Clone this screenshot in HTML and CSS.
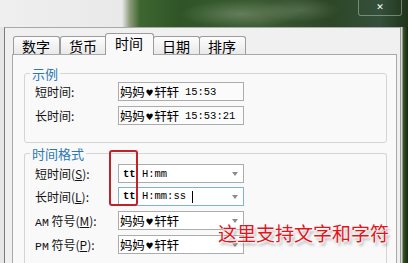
FILE: index.html
```html
<!DOCTYPE html>
<html lang="zh-CN">
<head>
    <meta charset="UTF-8">
    <title>区域选项 - 时间</title>
    <link rel="stylesheet" href="styles.css">
</head>
<body>
    <div class="titlebar">
        <div class="close-button">✕</div>
    </div>
    <div class="frame">
        <div class="frame-left"></div>
        <div class="dialog">
            <div class="tabs">
                <div class="tab">数字</div>
                <div class="tab">货币</div>
                <div class="tab selected">时间</div>
                <div class="tab">日期</div>
                <div class="tab">排序</div>
            </div>
            <div class="panel">
                <fieldset class="group">
                    <legend>示例</legend>
                    <div class="row">
                        <span class="label">短时间:</span>
                        <div class="textbox"><span class="cjk">妈妈<span class="heart">♥</span>轩轩</span> 15:53</div>
                    </div>
                    <div class="row">
                        <span class="label">长时间:</span>
                        <div class="textbox"><span class="cjk">妈妈<span class="heart">♥</span>轩轩</span> 15:53:21</div>
                    </div>
                </fieldset>
                <fieldset class="group group-format">
                    <legend>时间格式</legend>
                    <div class="row">
                        <span class="label">短时间(<u>S</u>):</span>
                        <div class="combo"><span class="mono"><b>tt</b> H:mm</span><span class="arrow"></span></div>
                    </div>
                    <div class="row">
                        <span class="label">长时间(<u>L</u>):</span>
                        <div class="combo focused"><span class="mono"><b>tt</b> H:mm:ss <span class="caret"></span></span><span class="arrow"></span></div>
                    </div>
                    <div class="row symbol">
                        <span class="label"><span class="ampm">AM</span> 符号(<u>M</u>):</span>
                        <div class="combo"><span class="cjk">妈妈<span class="heart">♥</span>轩轩</span><span class="arrow"></span></div>
                    </div>
                    <div class="row symbol">
                        <span class="label"><span class="ampm">PM</span> 符号(<u>P</u>):</span>
                        <div class="combo"><span class="cjk">妈妈<span class="heart">♥</span>轩轩</span><span class="arrow"></span></div>
                    </div>
                </fieldset>
            </div>
        </div>
        <div class="frame-right"></div>
    </div>

    <div class="highlight"></div>
    <div class="note">这里支持文字和字符</div>
</body>
</html>
```

FILE: styles.css
```css
body {
    margin: 0;
    width: 408px;
    height: 263px;
    overflow: hidden;
    position: relative;
    font-family: "Noto Sans CJK SC", "DejaVu Sans", sans-serif;
    font-size: 12px;
    color: #000;
    background-color: #2c4424;
}
.titlebar {
    height: 27px;
    display: flex;
    justify-content: flex-end;
    align-items: flex-start;
    background:
        radial-gradient(ellipse 60px 14px at 240px 14px, rgba(150, 170, 140, 0.45), transparent),
        radial-gradient(ellipse 40px 12px at 300px 10px, rgba(140, 160, 130, 0.35), transparent),
        linear-gradient(90deg, #efefef 0, #e9e9e9 122px, #8a9a78 130px, #3d6630 140px, #2f5426 180px, #3b5b33 260px, #2c4626 330px, #34503a 380px, #1f3419 100%);
}
.close-button {
    width: 42px;
    height: 15px;
    margin-right: 6px;
    border: 1px solid rgba(255, 255, 255, 0.35);
    border-top: none;
    border-radius: 0 0 3px 3px;
    color: #fff;
    font-family: "DejaVu Sans", sans-serif;
    font-size: 9px;
    font-weight: bold;
    line-height: 15px;
    text-align: center;
}
.frame {
    display: flex;
    height: 236px;
    overflow: hidden;
}
.frame-left {
    width: 4px;
    background-color: #e6e6e6;
}
.dialog {
    width: 395px;
    border-left: 1px solid #7c7c7c;
    border-top: 1px solid #a8a8a8;
    background-color: #f0f0f0;
    padding-top: 5px;
}
.frame-right {
    flex: 1;
    border-left: 1px solid #9a9a9a;
    background: linear-gradient(90deg, #d8d8d8 0, #d8d8d8 1px, #3c5a2a 2px, #23381b 5px, #182812 100%);
}
.tabs {
    display: flex;
    align-items: flex-end;
    height: 21px;
    padding-left: 8px;
    position: relative;
    z-index: 1;
}
.tab {
    height: 17px;
    padding: 0 9px 0 8px;
    border: 1px solid #9c9c9c;
    border-bottom: none;
    border-radius: 3px 3px 0 0;
    margin-right: -1px;
    background: linear-gradient(#fdfdfd, #e9e9e9);
    font-size: 14px;
    line-height: 18px;
    color: #000;
}
.tab.selected {
    height: 21px;
    padding: 0 10px 0 9px;
    margin: 0 -1px -1px -1px;
    background: #f9f9f9;
    line-height: 19px;
    position: relative;
}
.tab:nth-child(2) {
    margin-left: 1px;
}
.panel {
    box-sizing: border-box;
    margin: 0 3px 0 7px;
    height: 210px;
    overflow: hidden;
    border: 1px solid #a8a8a8;
    border-bottom: none;
    background-color: #f9f9f9;
    padding: 10px 9px 0 11px;
}
.group {
    margin: 0;
    padding: 0 0 12px 0;
    border: 1px solid #d5d5d5;
    border-radius: 3px;
}
.group legend {
    margin-left: 5px;
    padding: 0 2px;
    font-size: 13px;
    line-height: 17px;
    color: #2a78b4;
}
.group-format {
    margin-top: 2px;
    padding-top: 2px;
    padding-bottom: 0;
    height: 120px;
    border-bottom: none;
}
.row {
    display: flex;
    align-items: center;
    height: 19px;
    padding-left: 10px;
    margin-bottom: 5px;
}
.row.symbol {
    margin-top: 5px;
    margin-bottom: 4px;
}
.group-format .row {
    margin-bottom: 4px;
}
.label {
    width: 83px;
    color: #111;
    white-space: nowrap;
}
.label u {
    text-underline-offset: 1px;
}
.ampm {
    font-family: "Liberation Mono", monospace;
    font-size: 11.5px;
}
.textbox, .combo {
    width: 123px;
    height: 17px;
    border: 1px solid #acacac;
    display: flex;
    align-items: center;
    padding-left: 1px;
    white-space: pre;
    font-family: "Liberation Mono", monospace;
    font-size: 10.5px;
    background-color: #fbfbfb;
}
.combo {
    position: relative;
    background-color: #fff;
}
.combo.focused {
    border-color: #7fb5c6;
}
.cjk {
    font-family: "Noto Sans CJK SC", sans-serif;
    font-size: 12.5px;
    letter-spacing: -0.3px;
}
.heart {
    font-family: "DejaVu Sans", sans-serif;
    font-size: 9px;
    padding: 0 1px;
    vertical-align: 1px;
}
.mono {
    font-family: "Liberation Mono", monospace;
    font-size: 10.5px;
}
.combo .mono {
    padding-left: 3px;
}
.caret {
    display: inline-block;
    width: 1px;
    height: 12px;
    background-color: #000;
    vertical-align: middle;
}
.arrow {
    margin-left: auto;
    margin-right: 5px;
    width: 0;
    height: 0;
    border-left: 3px solid transparent;
    border-right: 3px solid transparent;
    border-top: 4px solid #8c8c8c;
}
.highlight {
    position: absolute;
    left: 109px;
    top: 150px;
    width: 25px;
    height: 52px;
    border: 2px solid #c3202a;
    border-radius: 3px;
}
.note {
    position: absolute;
    left: 218px;
    top: 220px;
    font-size: 19px;
    line-height: 26px;
    color: #e3141c;
    text-shadow: 0 0 2px #fff, 1px 1px 2px #fff, 2px 3px 3px rgba(0, 0, 0, 0.35);
}
```
